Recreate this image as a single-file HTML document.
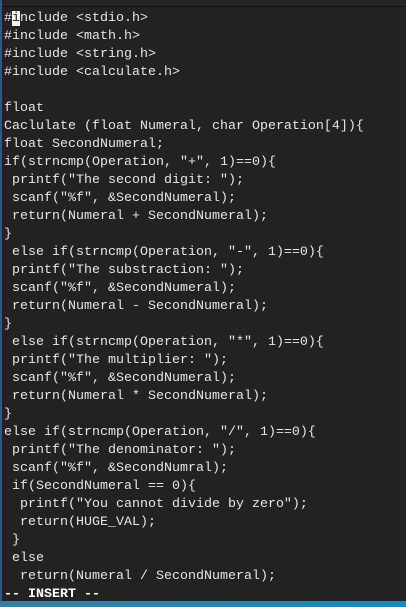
<!DOCTYPE html>
<html><head><meta charset="utf-8"><style>
html,body{margin:0;padding:0;width:406px;height:607px;overflow:hidden;background:#2a6f95;}
.left{position:absolute;left:0;top:0;width:2px;height:607px;background:#1f5f8f;}
.top{position:absolute;left:2px;top:0;right:0;height:6px;background:#242424;border-bottom:1px solid #111;}
.term{position:absolute;left:2px;top:7px;right:0;height:594px;background:#222222;}
.bot{position:absolute;left:0;top:601px;width:406px;height:6px;background:linear-gradient(90deg,#3a7ea3,#1e88b8);}
pre{position:absolute;left:4px;top:10px;margin:0;font-family:"Liberation Mono",monospace;font-size:13.33px;line-height:18px;color:#e6e6e6;}
.cur{background:#f0f0f0;color:#222;}
b{color:#fff;}
</style></head><body>
<div class="left"></div><div class="top"></div><div class="term"></div><div class="bot"></div>
<pre>#<span class="cur">i</span>nclude &lt;stdio.h&gt;
#include &lt;math.h&gt;
#include &lt;string.h&gt;
#include &lt;calculate.h&gt;

float
Caclulate (float Numeral, char Operation[4]){
float SecondNumeral;
if(strncmp(Operation, "+", 1)==0){
 printf("The second digit: ");
 scanf("%f", &amp;SecondNumeral);
 return(Numeral + SecondNumeral);
}
 else if(strncmp(Operation, "-", 1)==0){
 printf("The substraction: ");
 scanf("%f", &amp;SecondNumeral);
 return(Numeral - SecondNumeral);
}
 else if(strncmp(Operation, "*", 1)==0){
 printf("The multiplier: ");
 scanf("%f", &amp;SecondNumeral);
 return(Numeral * SecondNumeral);
}
else if(strncmp(Operation, "/", 1)==0){
 printf("The denominator: ");
 scanf("%f", &amp;SecondNumral);
 if(SecondNumeral == 0){
  printf("You cannot divide by zero");
  return(HUGE_VAL);
 }
 else
  return(Numeral / SecondNumeral);
<b>-- INSERT --</b></pre>
</body></html>
